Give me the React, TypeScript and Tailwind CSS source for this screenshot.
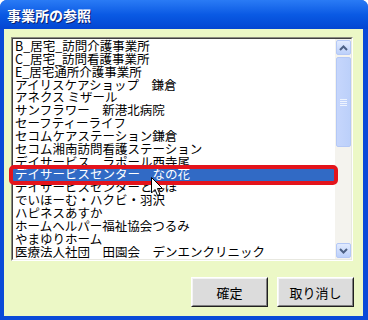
import React from "react";

const items = [
  "B_居宅_訪問介護事業所",
  "C_居宅_訪問看護事業所",
  "E_居宅通所介護事業所",
  "アイリスケアショップ　鎌倉",
  "アネクス ミザール",
  "サンフラワー　新港北病院",
  "セーフティーライフ",
  "セコムケアステーション鎌倉",
  "セコム湘南訪問看護ステーション",
  "デイサービス　ラポール西寺尾",
  "デイサービスセンター　なの花",
  "デイサービスセンターとんぼ",
  "でいほーむ・ハクビ・羽沢",
  "ハピネスあすか",
  "ホームヘルパー福祉協会つるみ",
  "やまゆりホーム",
  "医療法人社団　田園会　デンエンクリニック",
];

const font = { fontFamily: '"Noto Sans CJK JP", "Noto Sans", sans-serif' };

function Arrow({ up }: { up: boolean }) {
  return (
    <div className="h-[15px] w-[15px] rounded-[2px] border border-[#b4c8f6] bg-gradient-to-b from-[#e2ebfe] to-[#bcd0fa] flex items-center justify-center">
      <svg width="9" height="6" viewBox="0 0 9 6">
        <polyline
          points={up ? "1,5 4.5,1.5 8,5" : "1,1 4.5,4.5 8,1"}
          fill="none"
          stroke="#4d6185"
          strokeWidth="2"
        />
      </svg>
    </div>
  );
}

export default function App() {
  return (
    <div className="relative w-[368px] h-[320px] bg-[#0a4ad8] rounded-t-[7px] overflow-hidden flex flex-col" style={font}>
      <div className="h-[29px] shrink-0 bg-gradient-to-b from-[#2a7bf5] via-[#0a5ae4] to-[#0446d2] flex items-center pl-[7px]">
        <span className="text-white font-bold text-[14px] leading-none [text-shadow:1px_1px_0_#0a1e6e]">事業所の参照</span>
      </div>
      <div className="flex-1 ml-[4px] mr-[5px] mb-[4px] bg-[#ecf8c6] flex flex-col">
        <div className="mt-[8px] ml-[7px] mr-[10px] h-[224px] border border-t-[#8c8c80] border-l-[#8c8c80] border-r-white border-b-white">
          <div className="h-full border border-t-[#404040] border-l-[#404040] border-r-[#e8e8e0] border-b-[#e8e8e0] bg-white flex">
            <div className="flex-1 min-w-0 pt-[1px] overflow-hidden">
              {items.map((t, i) => (
                <div
                  key={i}
                  className={
                    "h-[12.85px] leading-[12.85px] text-[12.5px] pl-[2px] whitespace-nowrap " +
                    (i === 10 ? "bg-[#316ac5] text-white" : "text-black")
                  }
                >
                  {t}
                </div>
              ))}
            </div>
            <div className="w-[16px] shrink-0 bg-[#f4f3ee] flex flex-col items-center pt-[1px] pb-[1px]">
              <Arrow up />
              <div className="mt-[2px] h-[90px] w-[15px] rounded-[2px] border border-[#b4c8f6] bg-gradient-to-r from-[#c6d6fc] to-[#bcd0fa] flex flex-col items-center justify-center gap-[1px]">
                <div className="w-[7px] h-[1px] bg-[#eef4fe]" />
                <div className="w-[7px] h-[1px] bg-[#eef4fe]" />
                <div className="w-[7px] h-[1px] bg-[#eef4fe]" />
                <div className="w-[7px] h-[1px] bg-[#eef4fe]" />
              </div>
              <div className="flex-1" />
              <Arrow up={false} />
            </div>
          </div>
        </div>
        <div className="mt-[16px] mr-[9px] flex justify-end gap-[9px]">
          {["確定", "取り消し"].map((b) => (
            <div
              key={b}
              className="w-[77px] h-[30px] border border-t-white border-l-white border-r-[#202020] border-b-[#202020] bg-[#dcdcdc]"
            >
              <div className="h-full border border-t-[#f4f4f4] border-l-[#f4f4f4] border-r-[#808080] border-b-[#808080] flex items-center justify-center text-[13px] leading-none text-black">
                {b}
              </div>
            </div>
          ))}
        </div>
      </div>
      <div className="absolute left-[9px] top-[165px] w-[329px] h-[20px] border-[4px] border-[#e3141c] rounded-[5px]" />
      <svg className="absolute left-[151px] top-[177px]" width="13" height="20" viewBox="0 0 13 20">
        <path d="M0.5,0.5 L0.5,16 L4,12.5 L6.5,18.5 L9,17.5 L6.5,11.5 L11.5,11.5 Z" fill="white" stroke="black" strokeWidth="1" />
      </svg>
    </div>
  );
}
